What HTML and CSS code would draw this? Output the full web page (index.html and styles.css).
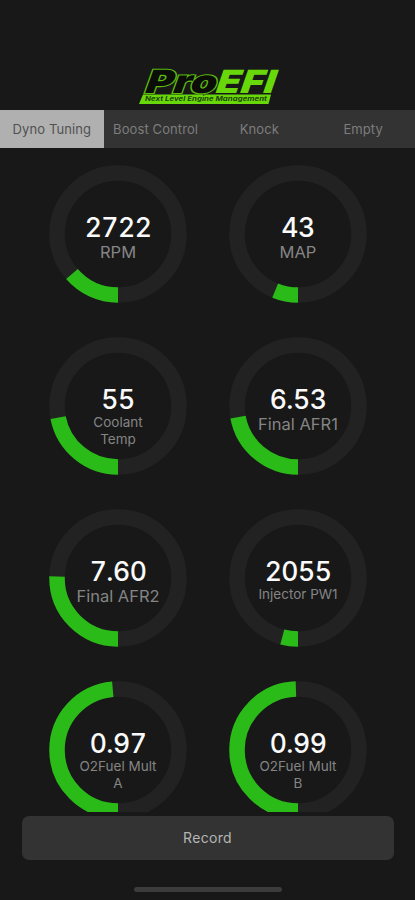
FILE: index.html
```html
<!DOCTYPE html>
<html lang="en">
<head>
<meta charset="utf-8">
<title>ProEFI</title>
<link rel="stylesheet" href="styles.css">
</head>
<body>
<div class="app">
  <header class="brand">
    <svg class="logo" width="145" height="44" viewBox="0 0 145 44" role="img" aria-label="ProEFI">
      <path class="logo-bar" d="M8 28.500H136L133.500 38H4Z"/>
      <g transform="translate(0 27) skewX(-8)">
        <text class="logo-pro" x="10" y="0" textLength="71" lengthAdjust="spacingAndGlyphs">Pro</text>
        <text class="logo-efi" x="80.500" y="0" textLength="59" lengthAdjust="spacingAndGlyphs">EFI</text>
      </g>
      <text class="logo-tag" x="10" y="35.200" textLength="122" lengthAdjust="spacingAndGlyphs">Next Level Engine Management</text>
    </svg>
  </header>
  <nav class="tabs">
    <a class="tab active">Dyno Tuning</a>
    <a class="tab">Boost Control</a>
    <a class="tab">Knock</a>
    <a class="tab">Empty</a>
  </nav>
  <main class="gauges">
    <section class="gauge">
      <svg class="ring" viewBox="0 0 138 138"><circle class="track" cx="69" cy="69" r="61"/><circle class="level" cx="69" cy="69" r="61" pathLength="360" stroke-dasharray="49 360"/></svg>
      <div class="reading"><b class="value">2722</b><span class="label">RPM</span></div>
    </section>
    <section class="gauge">
      <svg class="ring" viewBox="0 0 138 138"><circle class="track" cx="69" cy="69" r="61"/><circle class="level" cx="69" cy="69" r="61" pathLength="360" stroke-dasharray="22 360"/></svg>
      <div class="reading"><b class="value">43</b><span class="label">MAP</span></div>
    </section>
    <section class="gauge">
      <svg class="ring" viewBox="0 0 138 138"><circle class="track" cx="69" cy="69" r="61"/><circle class="level" cx="69" cy="69" r="61" pathLength="360" stroke-dasharray="79 360"/></svg>
      <div class="reading"><b class="value">55</b><span class="label small">Coolant<br>Temp</span></div>
    </section>
    <section class="gauge">
      <svg class="ring" viewBox="0 0 138 138"><circle class="track" cx="69" cy="69" r="61"/><circle class="level" cx="69" cy="69" r="61" pathLength="360" stroke-dasharray="79.500 360"/></svg>
      <div class="reading"><b class="value">6.53</b><span class="label">Final AFR1</span></div>
    </section>
    <section class="gauge">
      <svg class="ring" viewBox="0 0 138 138"><circle class="track" cx="69" cy="69" r="61"/><circle class="level" cx="69" cy="69" r="61" pathLength="360" stroke-dasharray="91.500 360"/></svg>
      <div class="reading"><b class="value">7.60</b><span class="label">Final AFR2</span></div>
    </section>
    <section class="gauge">
      <svg class="ring" viewBox="0 0 138 138"><circle class="track" cx="69" cy="69" r="61"/><circle class="level" cx="69" cy="69" r="61" pathLength="360" stroke-dasharray="15 360"/></svg>
      <div class="reading"><b class="value">2055</b><span class="label small">Injector PW1</span></div>
    </section>
    <section class="gauge">
      <svg class="ring" viewBox="0 0 138 138"><circle class="track" cx="69" cy="69" r="61"/><circle class="level" cx="69" cy="69" r="61" pathLength="360" stroke-dasharray="175 360"/></svg>
      <div class="reading"><b class="value">0.97</b><span class="label small">O2Fuel Mult<br>A</span></div>
    </section>
    <section class="gauge">
      <svg class="ring" viewBox="0 0 138 138"><circle class="track" cx="69" cy="69" r="61"/><circle class="level" cx="69" cy="69" r="61" pathLength="360" stroke-dasharray="178 360"/></svg>
      <div class="reading"><b class="value">0.99</b><span class="label small">O2Fuel Mult<br>B</span></div>
    </section>
  </main>
  <footer class="footer">
    <button class="record">Record</button>
    <div class="home-bar"></div>
  </footer>
</div>
</body>
</html>
```
FILE: styles.css
```css
* { box-sizing: border-box; }
body { margin: 0; background: #181818; font-family: Inter, sans-serif; }
.app { width: 415px; height: 900px; display: flex; flex-direction: column; overflow: hidden; background: #181818; }

.brand { height: 110px; flex: none; padding: 66px 0 0 135px; }
.logo { display: block; overflow: visible; }
.logo-bar { fill: #69d80b; }
.logo-pro, .logo-efi { font-family: Inter, sans-serif; font-style: italic; font-size: 32px; }
.logo-pro { font-weight: 900; fill: #0b0d09; stroke: #5cbd0d; stroke-width: 2.2; paint-order: stroke; }
.logo-efi { font-weight: 900; fill: #69d80b; }
.logo-tag { font-family: Inter, sans-serif; font-weight: 700; font-style: italic; font-size: 6px; fill: #1d4503; }

.tabs { height: 38px; flex: none; display: grid; grid-template-columns: repeat(4, 1fr); background: #333; }
.tab { display: flex; align-items: center; justify-content: center; font-size: 13px; letter-spacing: 0.1px; white-space: nowrap; color: #7d7d7d; }
.tab.active { background: #b0b0b0; color: #505050; }

.gauges { height: 664px; flex: none; padding: 17px 0 0 49px; display: grid; grid-template-columns: 138px 138px; grid-auto-rows: 138px; column-gap: 42px; row-gap: 34px; overflow: hidden; }
.gauge { display: grid; }
.ring, .reading { grid-area: 1 / 1; }
.ring { width: 138px; height: 138px; }
.track, .level { fill: none; stroke-width: 15.500; }
.track { stroke: #222; }
.level { stroke: #2abb18; transform: rotate(90deg); transform-origin: 69px 69px; }
.reading { display: flex; flex-direction: column; align-items: center; padding-top: 47px; text-align: center; }
.value { height: 30px; font-size: 26.500px; line-height: 30px; font-weight: 500; font-variant-numeric: tabular-nums; letter-spacing: -0.5px; color: #fafafa; }
.label { font-size: 16.500px; line-height: 20px; color: #858585; white-space: nowrap; }
.label.small { font-size: 13.500px; line-height: 17px; }

.footer { flex: 1; display: flex; flex-direction: column; align-items: center; padding-top: 4px; }
.record { width: 372px; height: 44px; border: 0; border-radius: 7px; padding: 0 0 2px; background: #333; color: #b5b5b5; font: 400 14px Inter, sans-serif; letter-spacing: 0.3px; }
.home-bar { width: 148px; height: 5px; margin-top: 27px; border-radius: 3px; background: #3c3c3c; }
```
